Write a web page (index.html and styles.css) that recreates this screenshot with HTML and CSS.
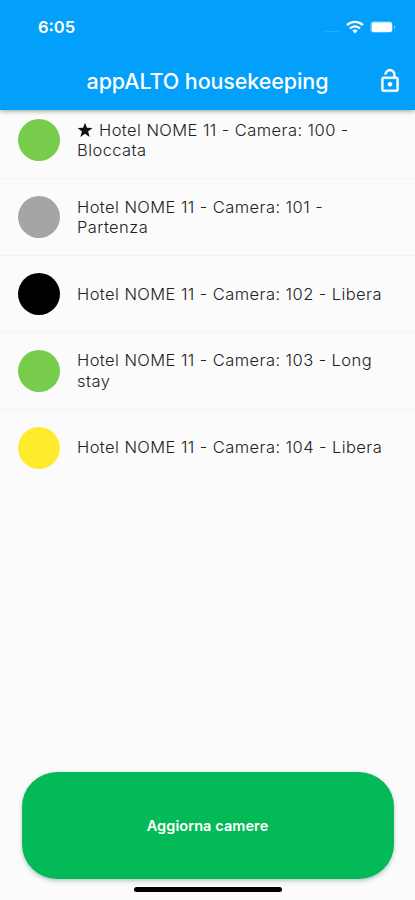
FILE: index.html
```html
<!DOCTYPE html>
<html lang="it">
<head>
<meta charset="utf-8">
<title>appALTO housekeeping</title>
<link rel="stylesheet" href="styles.css">
</head>
<body>
<div class="app">
  <header class="header">
    <div class="status">
      <span class="time">6:05</span>
      <span class="signal"></span>
      <svg class="wifi" viewBox="0 0 18 14" fill="none" stroke="#fff" stroke-width="2.4"><path d="M1 5.2C5.4.7 12.6.7 17 5.2M4 8.5c2.8-2.9 7.2-2.9 10 0"/><path d="M9 13.4 6.3 10.6c1.5-1.4 3.9-1.4 5.4 0z" fill="#fff" stroke="none"/></svg>
      <svg class="battery" viewBox="0 0 26 12"><rect x=".5" y=".5" width="22" height="11" rx="3" fill="none" stroke="#fff" stroke-opacity=".25"/><rect x="1.5" y="1.2" width="20.5" height="9.8" rx="1.8" fill="#fff"/><path d="M24 4.2c1.7.6 1.7 3 0 3.6z" fill="#fff" fill-opacity=".5"/></svg>
    </div>
    <div class="bar">
      <h1 class="title">appALTO housekeeping</h1>
      <svg class="lock" viewBox="0 0 24 24" fill="#fff" stroke="#fff" stroke-width=".3"><path d="M12 17c1.1 0 2-.9 2-2s-.9-2-2-2-2 .9-2 2 .9 2 2 2zm6-9h-1V6c0-2.76-2.24-5-5-5S7 3.24 7 6h1.9c0-1.71 1.39-3.1 3.1-3.1 1.71 0 3.1 1.39 3.1 3.1v2H6c-1.1 0-2 .9-2 2v10c0 1.1.9 2 2 2h12c1.1 0 2-.9 2-2V10c0-1.1-.9-2-2-2zm0 12H6V10h12v10z"/></svg>
    </div>
  </header>
  <ul class="rooms">
    <li class="room first"><span class="dot green"></span><span class="name"><svg class="star" viewBox="0 0 20 20"><path d="m10 .8 2.4 6.5 6.9.3-5.4 4.3 1.9 6.7-5.8-3.8-5.8 3.8 1.9-6.7L.7 7.6l6.9-.3z"/></svg>Hotel NOME 11 - Camera: 100 -<br>Bloccata</span></li>
    <li class="room"><span class="dot gray"></span><span class="name">Hotel NOME 11 - Camera: 101 -<br>Partenza</span></li>
    <li class="room"><span class="dot black"></span><span class="name">Hotel NOME 11 - Camera: 102 - Libera</span></li>
    <li class="room"><span class="dot green"></span><span class="name">Hotel NOME 11 - Camera: 103 - Long<br>stay</span></li>
    <li class="room"><span class="dot yellow"></span><span class="name">Hotel NOME 11 - Camera: 104 - Libera</span></li>
  </ul>
  <footer class="footer">
    <button class="update">Aggiorna camere</button>
    <div class="home"></div>
  </footer>
</div>
</body>
</html>
```
FILE: styles.css
```css
* { box-sizing: border-box; }
body { margin: 0; background: #fbfbfb; font-family: Inter, "Liberation Sans", sans-serif; }
.app { width: 415px; height: 900px; display: flex; flex-direction: column; overflow: hidden; }
.header { height: 110px; flex: none; background: #02a0fa; color: #fff; box-shadow: 0 1px 5px rgba(0,0,0,.38); }
.status { height: 54px; display: flex; align-items: center; padding: 0 19px 0 38px; }
.time { font-size: 16.5px; font-weight: 600; line-height: 20px; margin-right: auto; }
.signal { width: 14px; height: 1px; margin: 8px 7px 0 0; background: #16b4fc; }
.wifi { width: 18px; height: 14px; margin-right: 6px; }
.battery { width: 26px; height: 12px; }
.bar { height: 54px; display: grid; grid-template-columns: 60px 1fr 60px; align-items: center; }
.title { grid-column: 2; margin: 0; text-align: center; font-size: 21.5px; font-weight: 500; line-height: 26px; letter-spacing: -.1px; white-space: nowrap; }
.lock { width: 26px; height: 26px; margin-left: 22px; }
.rooms { list-style: none; margin: 0; padding: 0; flex: 1; }
.room { height: 76.75px; display: flex; align-items: center; gap: 17px; padding-left: 18px; border-bottom: 1px solid #f4f4f4; }
.first { height: 69.4px; padding-bottom: 8px; }
.room:last-child { border-bottom: 0; height: 75.75px; }
.dot { width: 42px; height: 42px; flex: none; border-radius: 50%; }
.green { background: #78cc4c; }
.gray { background: #a5a5a5; }
.black { background: #000; }
.yellow { background: #ffeb2e; }
.name { font-size: 16.5px; font-weight: 300; line-height: 20.5px; letter-spacing: .43px; color: #222; white-space: nowrap; }
.star { width: 16px; height: 16px; margin-right: 6px; vertical-align: -2px; fill: #111; }
.footer { height: 128px; flex: none; display: flex; flex-direction: column; align-items: center; }
.update { width: 372px; height: 107px; border: 0; border-radius: 35px; background: #04b957; color: #fff; font: 600 14.5px/20px Inter, "Liberation Sans", sans-serif; letter-spacing: .08px; box-shadow: 0 2px 4px rgba(0,90,60,.3); }
.home { width: 148px; height: 5px; margin-top: 8px; border-radius: 3px; background: #000; }
```
